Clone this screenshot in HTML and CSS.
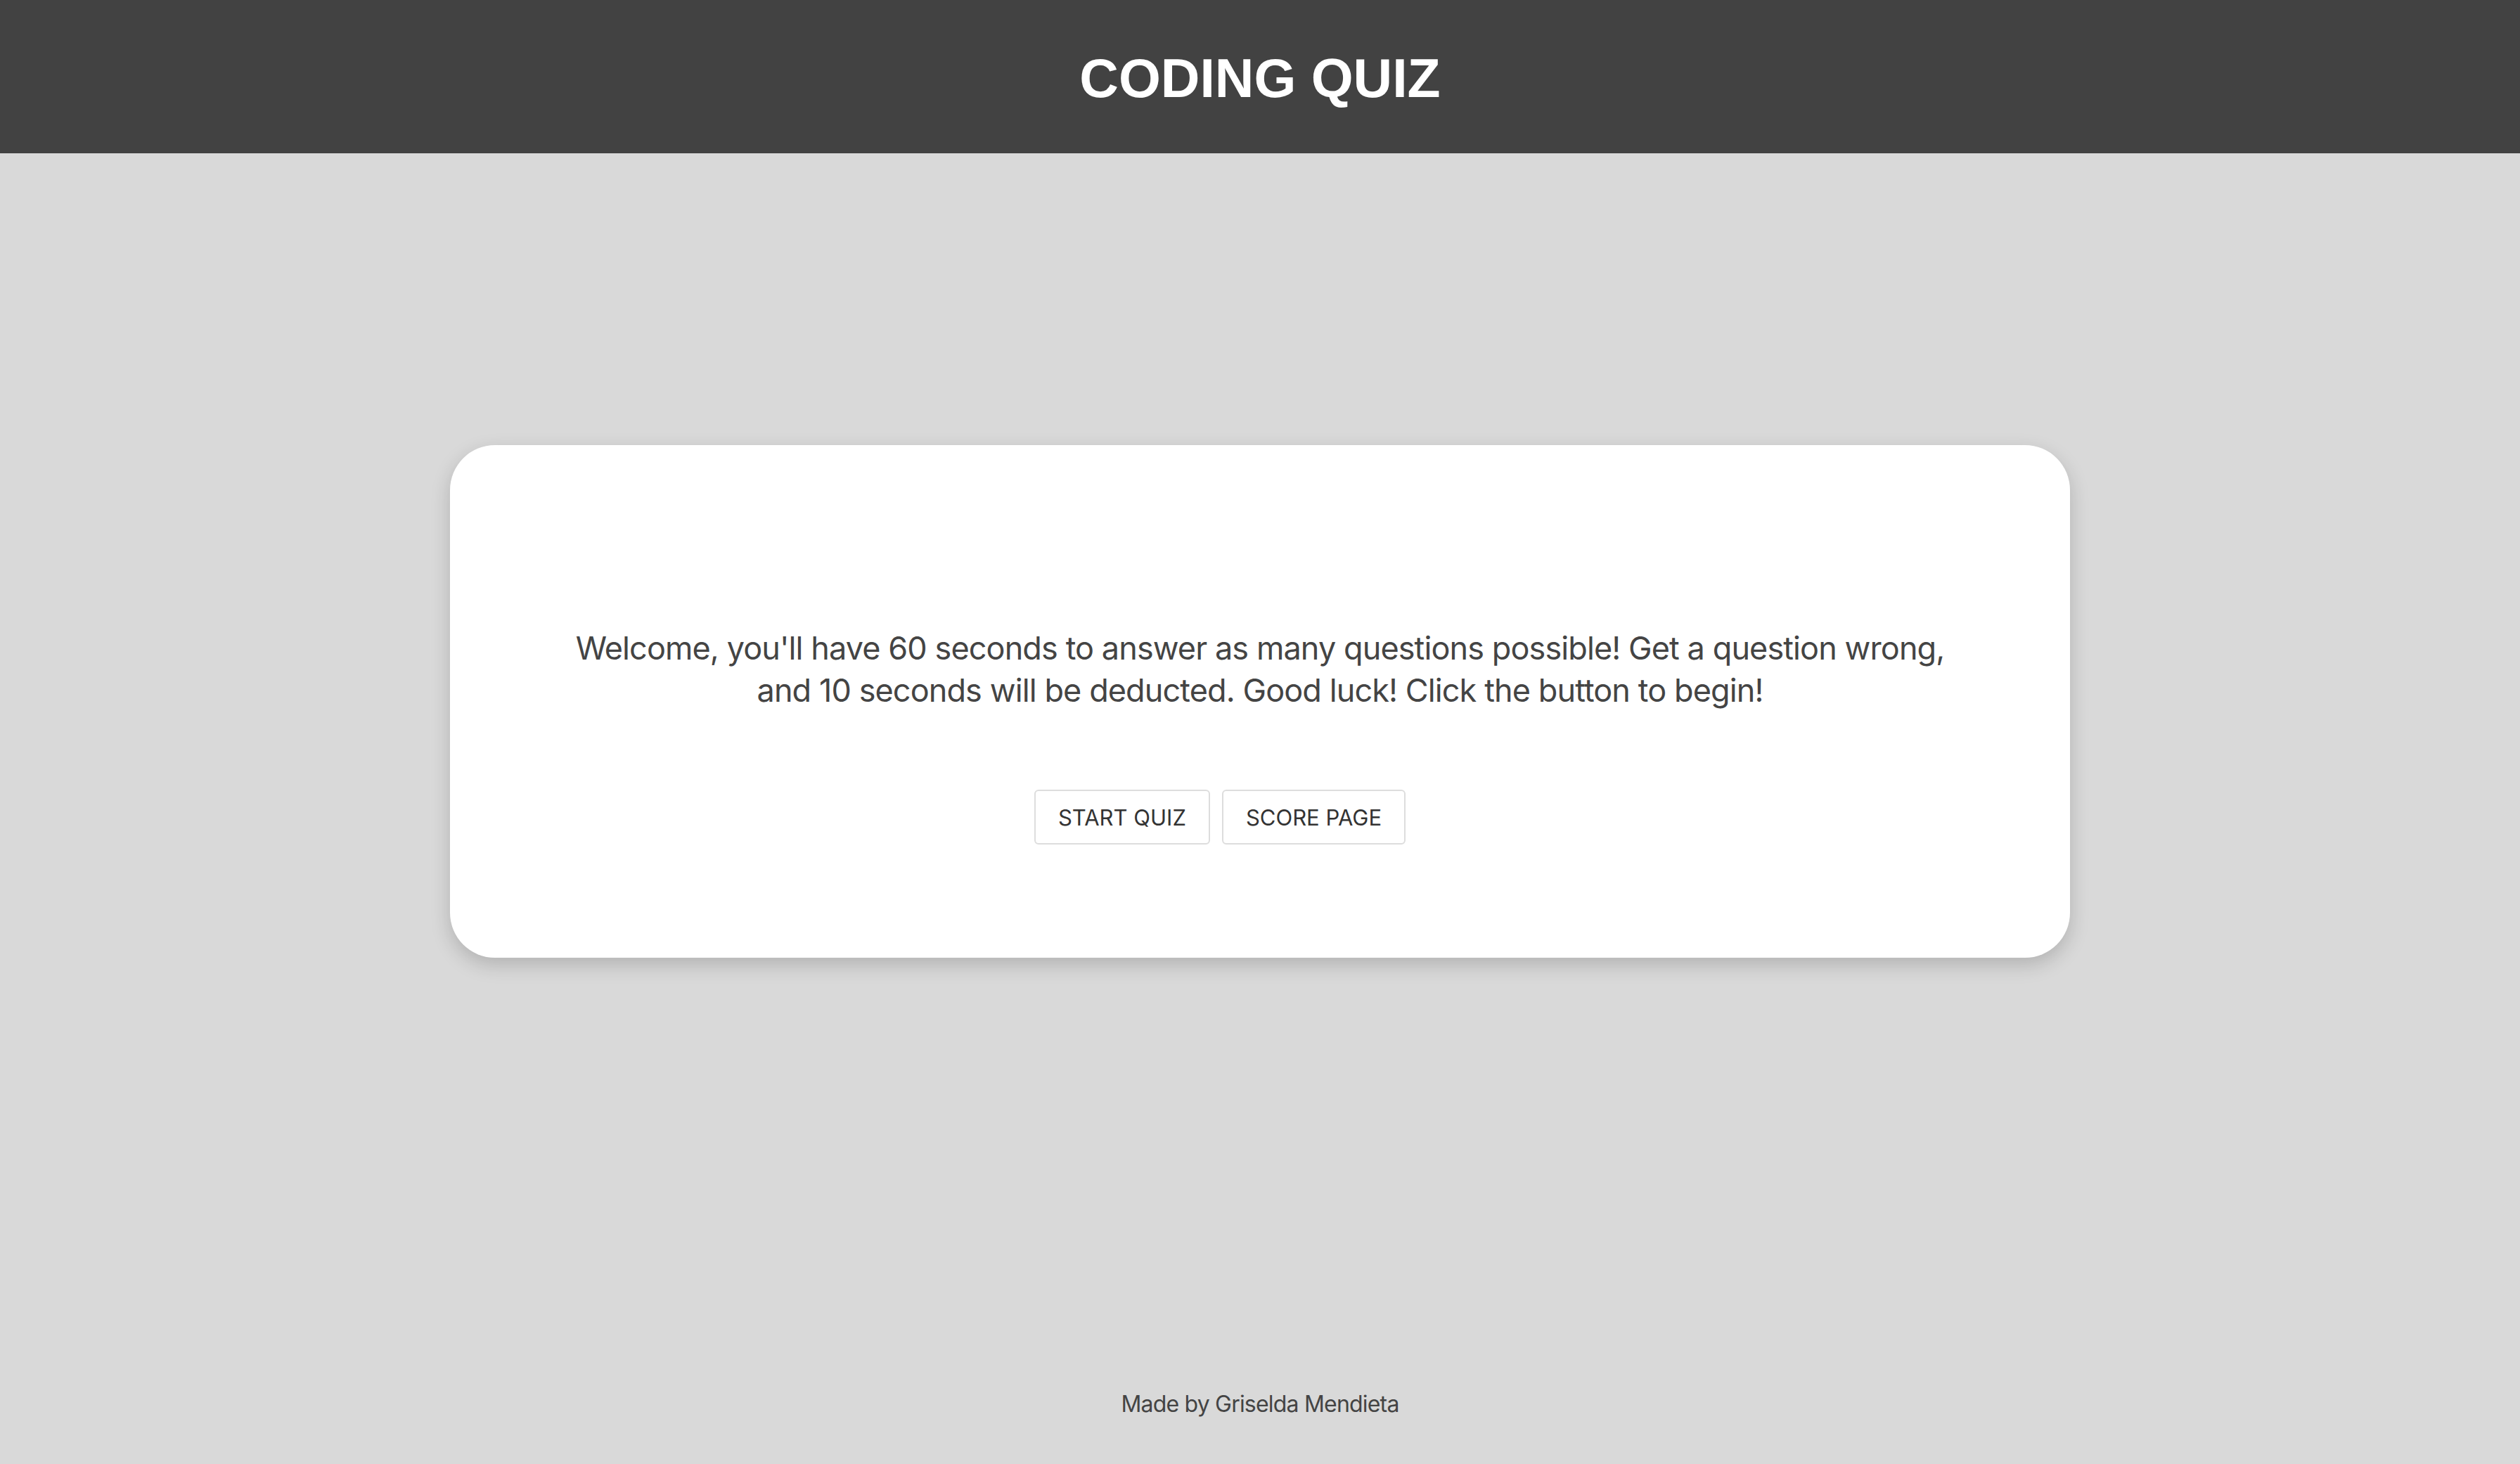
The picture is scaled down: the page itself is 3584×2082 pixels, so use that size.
FILE: index.html
```html
<!DOCTYPE html>
<html lang="en">
<head>
<meta charset="utf-8">
<title>Coding Quiz</title>
<link rel="stylesheet" href="styles.css">
</head>
<body>
<header class="topbar">
  <h1 class="title">CODING QUIZ</h1>
</header>
<main class="main">
  <section class="card">
    <p class="intro">Welcome, you'll have 60 seconds to answer as many questions possible! Get a question wrong, and 10 seconds will be deducted. Good luck! Click the button to begin!</p>
    <div class="actions">
      <button class="btn" type="button">START QUIZ</button>
      <button class="btn" type="button">SCORE PAGE</button>
    </div>
  </section>
</main>
<footer class="footer">Made by Griselda Mendieta</footer>
</body>
</html>
```
FILE: styles.css
```css
* { box-sizing: border-box; }
html, body { margin: 0; padding: 0; }
body {
  background: #d9d9d9;
  font-family: Inter, "Noto Sans", sans-serif;
  min-height: 100vh;
  display: flex;
  flex-direction: column;
}
.topbar {
  background: #424242;
  height: 218px;
  display: flex;
  align-items: center;
  justify-content: center;
}
.title {
  margin: 0;
  padding-top: 4px;
  color: #ffffff;
  font-family: "Liberation Sans", Arial, sans-serif;
  font-weight: 700;
  font-size: 77px;
  line-height: 1;
}
.main {
  display: flex;
  justify-content: center;
  padding-top: 415px;
}
.card {
  width: 2304px;
  height: 729px;
  background: #ffffff;
  border-radius: 64px;
  box-shadow: 0 10px 28px rgba(0, 0, 0, 0.18);
  display: flex;
  flex-direction: column;
  align-items: center;
  padding-top: 259px;
}
.intro {
  margin: 0;
  max-width: 2000px;
  text-align: center;
  color: #444444;
  font-size: 45px;
  line-height: 60px;
  letter-spacing: -0.9px;
}
.actions {
  display: flex;
  gap: 17px;
  margin-top: 111px;
  padding-right: 114px;
}
.btn {
  height: 78px;
  padding: 0 32px;
  background: #ffffff;
  border: 2px solid #dddddd;
  border-radius: 6px;
  color: #333333;
  font-family: Inter, "Noto Sans", sans-serif;
  font-size: 31px;
}
.footer {
  margin-top: auto;
  text-align: center;
  color: #444444;
  font-size: 32px;
  line-height: 38px;
  letter-spacing: -0.8px;
  padding-bottom: 66px;
}
```
